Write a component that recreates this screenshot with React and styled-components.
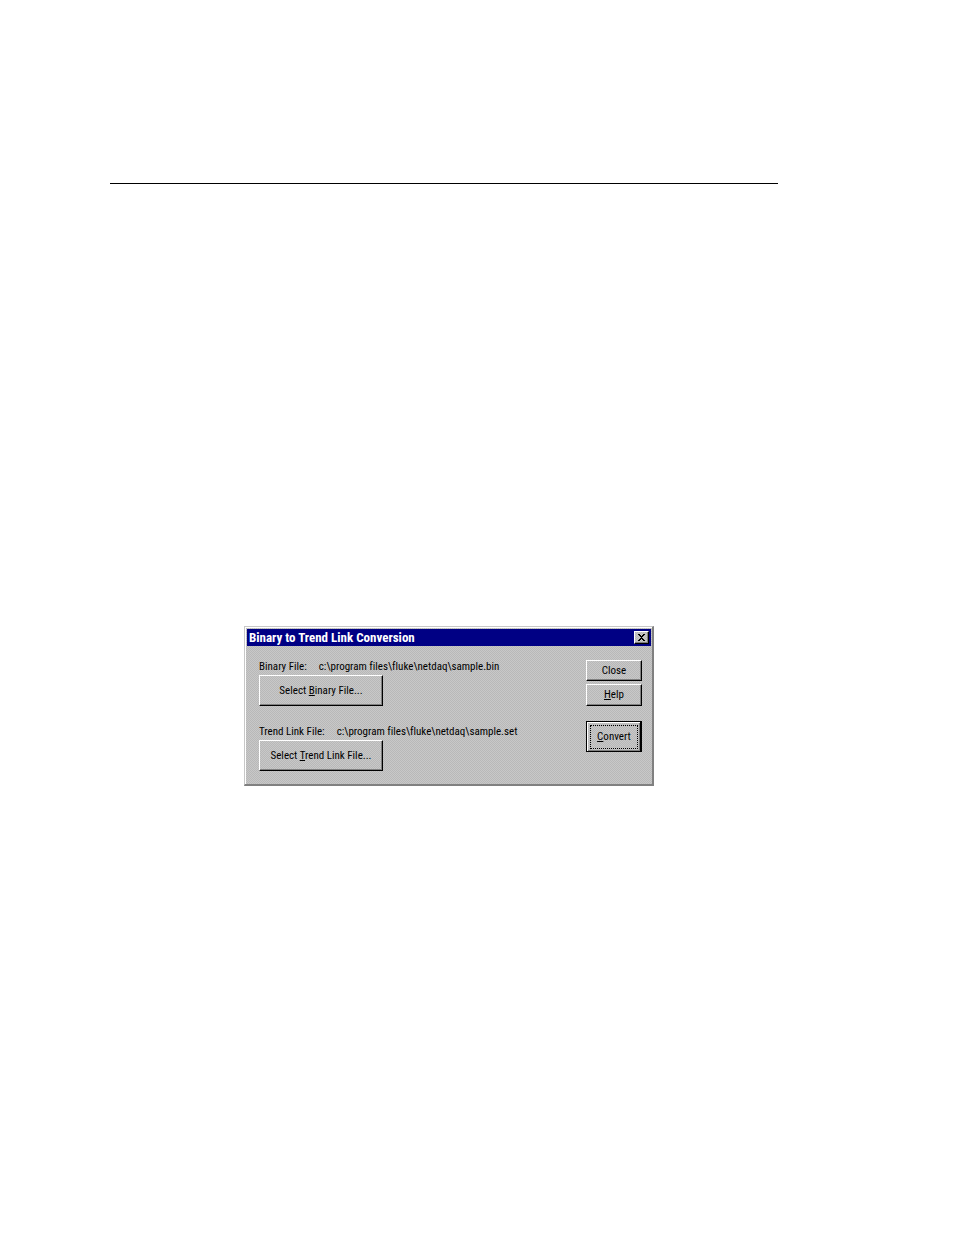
import React, { Component } from "react";
import styled, { createGlobalStyle, css } from "styled-components";

const GlobalStyle = createGlobalStyle`
body {
  margin: 0;
  background-color: white;
}
`;
// one pixel checkerboard, like an old dithered grey
const dither = css`
background: repeating-conic-gradient(#c8c8c8 0% 25%, #b8b8b8 0% 50%) 0 0 / 2px 2px;
`;
const Page = styled.main`
padding: 183px 176px 0 110px;
font-family: "Roboto Condensed", Roboto, "Liberation Sans", Arial, sans-serif;
font-size: 11px;
line-height: 16px;
font-variant-ligatures: none;
color: black;
`;
const Rule = styled.hr`
margin: 0;
border: 0;
border-top: 1px solid black;
`;
const Dialog = styled.section`
${dither}
box-sizing: border-box;
margin: 442px 124px 0 134px;
padding: 1px;
border-style: solid;
border-width: 1px 2px 2px 1px;
border-color: #c8c8c8 #808080 #808080 #c8c8c8;
box-shadow: inset 1px 1px 0 white;
`;
const TitleBar = styled.header`
display: flex;
align-items: center;
justify-content: space-between;
height: 17px;
margin: 1px 0 0 1px;
padding: 0 2px;
background-color: #000084;
color: white;
`;
const Title = styled.h1`
margin: 0;
font-size: 13px;
line-height: 17px;
white-space: nowrap;
`;
const Button = styled.button`
${dither}
display: flex;
align-items: center;
justify-content: center;
box-sizing: border-box;
width: ${props => props.$width || "100%"};
height: ${props => props.$height};
padding: 0;
border: 1px solid;
border-color: white black black white;
border-radius: 0;
box-shadow: inset -1px -1px 0 #808080;
font: inherit;
font-variant-ligatures: none;
color: black;
white-space: nowrap;
`;
const DefaultButton = styled(Button)`
padding: 3px 2px 2px 3px;
border-width: 1px 2px 1px 1px;
border-color: black;
box-shadow: inset 1px 1px 0 white, inset -1px -1px 0 #808080;
`;
const Focus = styled.span`
display: flex;
flex: 1;
align-self: stretch;
align-items: center;
justify-content: center;
border: 1px dotted black;
`;
const Body = styled.div`
display: flex;
justify-content: space-between;
padding: 13px 9px 12px 13px;
`;
const Files = styled.div`
display: flex;
flex-direction: column;
gap: 18px;
`;
const Path = styled.p`
display: flex;
gap: 12px;
margin: 0;
white-space: nowrap;
`;
const Actions = styled.div`
display: flex;
flex-direction: column;
gap: 3px;
width: 56px;
padding-top: 1px;
`;
const Spacer = styled.div`
height: 9px;
`;

class FileRow extends Component {
  render() {
    return (
      <div>
        <Path>
          <span>{this.props.label}</span>
          <span>{this.props.path}</span>
        </Path>
        <Button type="button" $width="124px" $height="31px">
          <span>{this.props.children}</span>
        </Button>
      </div>
    );
  }
}

export default class App extends Component {
  render() {
    return (
      <Page>
        <GlobalStyle />
        <Rule />
        <Dialog role="dialog" aria-labelledby="dialog-title">
          <TitleBar>
            <Title id="dialog-title">Binary to Trend Link Conversion</Title>
            <Button type="button" aria-label="Close window" $width="15px" $height="13px">
              <svg width="7" height="7" viewBox="0 0 7 7" shapeRendering="crispEdges">
                <path d="M0 0h2v1h1v1h1v-1h1v-1h2v1h-1v1h-1v1h-1v1h1v1h1v1h1v1h-2v-1h-1v-1h-1v1h-1v1h-2v-1h1v-1h1v-1h1v-1h-1v-1h-1v-1h-1z" />
              </svg>
            </Button>
          </TitleBar>
          <Body>
            <Files>
              <FileRow label="Binary File:" path="c:\program files\fluke\netdaq\sample.bin">
                Select <u>B</u>inary File...
              </FileRow>
              <FileRow label="Trend Link File:" path="c:\program files\fluke\netdaq\sample.set">
                Select <u>T</u>rend Link File...
              </FileRow>
            </Files>
            <Actions>
              <Button type="button" $height="21px">Close</Button>
              <Button type="button" $height="22px">
                <span><u>H</u>elp</span>
              </Button>
              <Spacer />
              <DefaultButton type="button" $height="31px">
                <Focus>
                  <span><u>C</u>onvert</span>
                </Focus>
              </DefaultButton>
            </Actions>
          </Body>
        </Dialog>
      </Page>
    );
  }
}
